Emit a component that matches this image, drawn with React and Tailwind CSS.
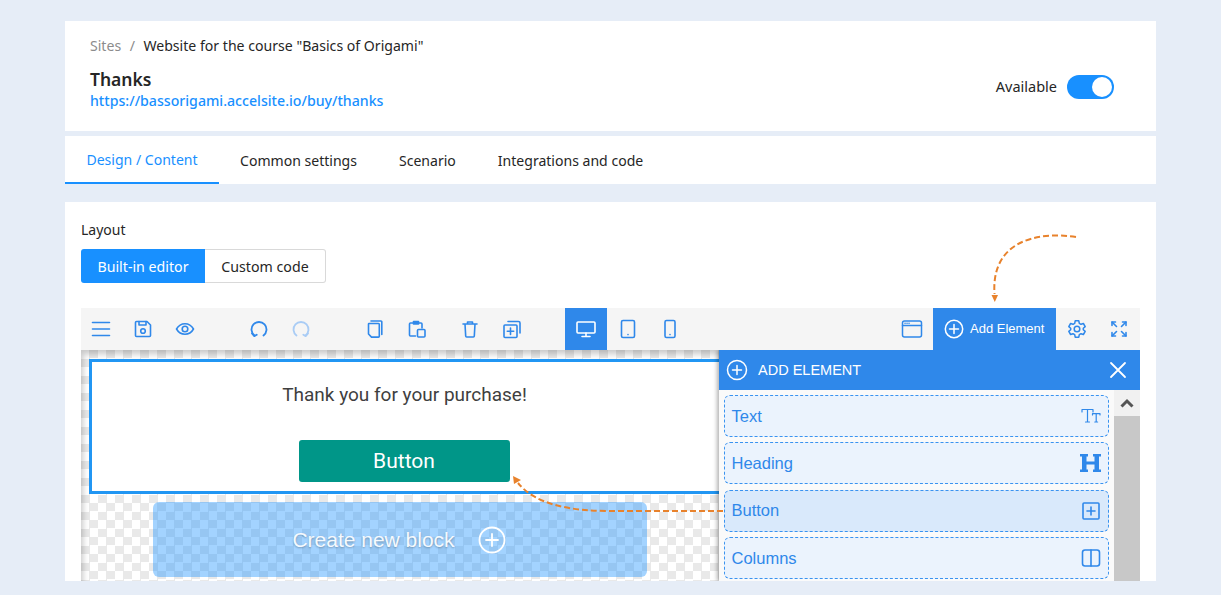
const B = "#2f88ea";
const Ic = ({ children, s = 20, className = "", color = B, vb, sw = 1.7 }) => (
  <svg width={s} height={s} viewBox={vb || `0 0 ${s} ${s}`} fill="none" stroke={color} strokeWidth={sw} strokeLinecap="round" strokeLinejoin="round" className={className}>{children}</svg>
);
const TB = ({ children, active }) => (
  <div className={`w-[42px] h-[42px] flex items-center justify-center shrink-0 ${active ? "bg-[#2f88ea]" : ""}`}>{children}</div>
);
const Item = ({ label, active, children }) => (
  <div className={`h-[42px] rounded-md border border-dashed border-[#3a93f0] flex items-center justify-between pl-[6.5px] pr-[7px] text-[16.5px] text-[#2f88ea] ${active ? "bg-[#d9e9fb]" : "bg-[#ebf3fd]"}`}>
    <span>{label}</span>
    {children}
  </div>
);
const board = "bg-[conic-gradient(#e9e9e9_25%,#ffffff_0_50%,#e9e9e9_0_75%,#ffffff_0)] bg-[size:17px_17px]";

export default function App() {
  return (
    <div className="h-[595px] overflow-hidden bg-[#e6edf7] px-[65px] pt-[21px] font-['Noto_Sans',sans-serif] text-[#262626]">
      <div className="w-[1091px] h-[110px] bg-white flex justify-between pl-[25px] pr-[42px]">
        <div className="pt-[15px]">
          <div className="text-[14.1px] leading-[20px] flex">
            <span className="text-[#8c8c8c]">Sites</span>
            <span className="text-[#8c8c8c] mx-[8.5px]">/</span>
            <span>Website for the course "Basics of Origami"</span>
          </div>
          <div className="mt-[12px] text-[17.5px] leading-[22px] font-semibold">Thanks</div>
          <div className="mt-px text-[14.15px] leading-[20px] font-medium text-[#1890ff]">https://bassorigami.accelsite.io/buy/thanks</div>
        </div>
        <div className="flex items-center gap-[10px] pt-[22px]">
          <span className="text-[14.5px]">Available</span>
          <div className="w-[47px] h-[24px] rounded-full bg-[#1890ff] flex justify-end items-center pr-[2px]">
            <div className="w-[20px] h-[20px] rounded-full bg-white"></div>
          </div>
        </div>
      </div>

      <div className="w-[1091px] h-[48px] mt-[5px] bg-white flex text-[14.05px]">
        <div className="h-[48px] w-[154px] pt-px flex items-center justify-center text-[#1890ff] border-b-2 border-[#1890ff]">Design / Content</div>
        <div className="h-[48px] px-[21px] pt-[2px] flex items-center">Common settings</div>
        <div className="h-[48px] px-[21px] pt-[2px] flex items-center">Scenario</div>
        <div className="h-[48px] px-[21px] pt-[2px] flex items-center">Integrations and code</div>
      </div>

      <div className="w-[1091px] h-[379px] mt-[18px] bg-white px-[16px] pt-[18px] overflow-hidden relative">
        <div className="text-[14px] leading-[20px]">Layout</div>
        <div className="flex mt-[9px] text-[14.2px]">
          <div className="w-[124px] h-[34px] pt-px bg-[#1890ff] text-white rounded-l-[3px] flex items-center justify-center">Built-in editor</div>
          <div className="w-[121px] h-[34px] pt-px border border-l-0 border-[#d9d9d9] rounded-r-[3px] flex items-center justify-center">Custom code</div>
        </div>

        <div className="mt-[25px] w-[1059px] font-['Liberation_Sans',sans-serif]">
          <div className="h-[42px] bg-[#f5f5f5] flex">
            <div className="flex -ml-px">
              <TB><Ic sw={1.6}><path d="M1.500 3.500h17M1.500 10h17M1.500 16.500h17" /></Ic></TB>
              <TB><Ic sw={1.6}><path d="M2.500 3.500a1 1 0 0 1 1-1h10.500l3.500 3.500v10.500a1 1 0 0 1-1 1h-13a1 1 0 0 1-1-1z" /><path d="M6 2.500v3.500h7V2.500" /><circle cx="10" cy="12" r="2.300" /></Ic></TB>
              <TB><Ic sw={1.6}><path d="M1.500 10c2-3.500 5-5.300 8.500-5.300s6.500 1.800 8.500 5.300c-2 3.500-5 5.300-8.500 5.300S3.500 13.500 1.500 10z" /><circle cx="10" cy="10" r="2.800" /></Ic></TB>
            </div>
            <div className="flex ml-[32px]">
              <TB><Ic sw={1.8}><path d="M5.500 16.500a7.500 7.500 0 1 1 9 0" /><path d="M3 14.500l2.300 2.600 2.400-1.300" /></Ic></TB>
              <TB><Ic sw={1.8} color="#a9ccf5"><path d="M5.500 16.500a7.500 7.500 0 1 1 9 0" /><path d="M17 14.500l-2.300 2.600-2.400-1.300" /></Ic></TB>
            </div>
            <div className="flex ml-[32px]">
              <TB><Ic sw={1.6}><path d="M4 4.500h9.500a.8.800 0 0 1 .8.800v12a.8.800 0 0 1-.8.800H6.500L3.500 15V5a.5.500 0 0 1 .5-.5z" /><path d="M6 2h10a.8.800 0 0 1 .8.800V15.500" /></Ic></TB>
              <TB><Ic sw={1.6}><path d="M8.500 17H3.500a1 1 0 0 1-1-1V5a1 1 0 0 1 1-1h10.500a1 1 0 0 1 1 1v4" /><rect x="6.500" y="2.500" width="5" height="2.500" fill={B} /><rect x="10.500" y="10.500" width="7.500" height="7.500" rx="1" /></Ic></TB>
            </div>
            <div className="flex ml-[11px]">
              <TB><Ic sw={1.6}><path d="M3 5h14M7.500 5V3h5v2M5 5l.7 12a1 1 0 0 0 1 1h6.600a1 1 0 0 0 1-1L15 5" /></Ic></TB>
              <TB><Ic sw={1.6}><rect x="2" y="6" width="13" height="12.500" rx="1" /><path d="M8.500 9v6.500M5.300 12.200h6.400" /><path d="M6 2.500h10.500a1.500 1.500 0 0 1 1.500 1.500V14" /></Ic></TB>
            </div>
            <div className="flex ml-[32px]">
              <TB active><Ic sw={1.6} color="#ffffff"><rect x="1" y="3" width="18" height="11" rx="1" /><path d="M10 14v3M6 17.500h8" /></Ic></TB>
              <TB><Ic sw={1.6}><rect x="3.500" y="1.500" width="13" height="17" rx="1.500" /><path d="M10 15.500v.1" /></Ic></TB>
              <TB><Ic sw={1.6}><rect x="5" y="1.500" width="10" height="17" rx="1.500" /><path d="M10 15.500v.1" /></Ic></TB>
            </div>
            <div className="flex ml-auto">
              <TB><Ic s={22} sw={1.5}><rect x="1.500" y="3" width="19" height="16" rx="2" /><path d="M1.500 7.500h19" /><path d="M4 5.300h.1M6 5.300h.1M8 5.300h.1" /></Ic></TB>
              <div className="w-[123px] h-[42px] bg-[#2f88ea] text-white text-[13px] flex items-center pl-[11px] gap-[6px]">
                <Ic sw={1.5} color="#ffffff"><circle cx="10" cy="10" r="8.700" /><path d="M10 5.500v9M5.500 10h9" /></Ic>
                <span className="whitespace-nowrap">Add Element</span>
              </div>
              <TB><Ic sw={1.5}><path d="M8.200 1.800h3.600l.5 2.500 1.700 1 2.400-.8 1.800 3.100-1.900 1.700v1.400l1.900 1.700-1.800 3.100-2.400-.8-1.700 1-.5 2.500H8.200l-.5-2.500-1.700-1-2.400.8-1.800-3.100 1.900-1.700V9.300L1.800 7.600l1.800-3.100 2.400.8 1.700-1z" /><circle cx="10" cy="10" r="2.800" /></Ic></TB>
              <TB><Ic s={18} sw={1.6}><path d="M2 2l4.500 4.500M16 2l-4.500 4.500M2 16l4.500-4.500M16 16l-4.500-4.500" /><path d="M2 5.500V2h3.500M16 5.500V2h-3.500M2 12.500V16h3.500M16 12.500V16h-3.500" /></Ic></TB>
            </div>
          </div>

          <div className={`relative h-[231px] overflow-hidden ${board}`}>
            <div className="absolute inset-0 shadow-[inset_4px_6px_6px_-2px_rgba(0,0,0,0.22)]"></div>
            <div className="relative ml-[8px] mt-[9px] w-[636px] h-[135px] bg-white border-[3px] border-[#2196f3] pr-[6px] flex flex-col items-center font-['Roboto',sans-serif] text-[#3f3f3f]">
              <div className="text-[19px] leading-[24px] mt-[21px] pl-px">Thank you for your purchase!</div>
              <div className="w-[211px] h-[42px] mt-[33px] pt-[2px] bg-[#009688] rounded-[3px] text-white text-[21px] flex items-center justify-center">Button</div>
            </div>
            <div className="relative ml-[72px] mt-[8px] w-[494px] h-[75px] rounded-md bg-[#1890ff]/40 flex items-center justify-center gap-[23px] text-white text-[21px] pr-[2px]">
              <span className="opacity-90 [text-shadow:0_1px_2px_rgba(0,0,0,0.3)]">Create new block</span>
              <Ic s={28} sw={1.8} color="#ffffff"><circle cx="14" cy="14" r="12.500" /><path d="M14 8v12M8 14h12" /></Ic>
            </div>

            <div className="absolute left-[638px] top-0 w-[421px] h-[231px] bg-[#fafafa] shadow-[-2px_0_4px_rgba(0,0,0,0.3)]">
              <div className="h-[40px] bg-[#2f88ea] text-white flex items-center pl-[7px] pr-[13px] text-[14.5px]">
                <Ic s={22} sw={1.500} color="#ffffff"><circle cx="11" cy="11" r="9.500" /><path d="M11 6.500v9M6.500 11h9" /></Ic>
                <span className="ml-[10px] pt-px">ADD ELEMENT</span>
                <Ic s={18} sw={1.800} color="#ffffff" className="ml-auto"><path d="M2 2l14 14M16 2L2 16" /></Ic>
              </div>
              <div className="flex">
                <div className="w-[395px] px-[5px] pt-[5px] flex flex-col gap-[5.33px]">
                  <Item label="Text"><Ic s={20} sw={1.2}><path d="M1 6V3.500h11V6M6.500 3.500V16M4.500 16h4M11.500 9V7.700h7.500V9M15.200 7.700V16M13.800 16h2.800" /></Ic></Item>
                  <Item label="Heading"><svg width="21" height="20" viewBox="0 0 21 20" fill="#2f88ea"><path d="M0 1h8v2.500H6.500v5h8v-5H13V1h8v2.500h-2v13h2V19h-8v-2.500h1.500v-5h-8v5H8V19H0v-2.500h2v-13H0z" /></svg></Item>
                  <Item label="Button" active><Ic sw={1.6}><rect x="2" y="2" width="16" height="16" rx="1" /><path d="M10 6v8M6 10h8" /></Ic></Item>
                  <Item label="Columns"><Ic sw={1.6}><rect x="1.500" y="2" width="17" height="16" rx="2.500" /><path d="M10 2v16" /></Ic></Item>
                </div>
                <div className="w-[26px] h-[191px] bg-[#c8c8c8] shrink-0">
                  <div className="h-[26px] bg-[#f1f1f1] flex items-center justify-center">
                    <svg width="14" height="10" viewBox="0 0 14 10" fill="none" stroke="#555555" strokeWidth="3"><path d="M1.500 8.500L7 3l5.500 5.500" /></svg>
                  </div>
                </div>
              </div>
            </div>

            <svg className="absolute left-[420px] top-[115px]" width="240" height="60" viewBox="0 0 240 60" fill="none">
              <path d="M222 46H110C70 46 35 40 17 18" stroke="#e8822c" strokeWidth="2" strokeDasharray="6 3" />
              <path d="M12 11l8 4-7 4z" fill="#e8822c" />
            </svg>
          </div>
        </div>

        <svg className="absolute left-[920px] top-[30px]" width="100" height="75" viewBox="0 0 100 75" fill="none">
          <path d="M91 5C50 -1 6 10 9.500 62" stroke="#e8822c" strokeWidth="2" strokeDasharray="6 3" />
          <path d="M6.500 63h6.500l-3.200 7z" fill="#e8822c" />
        </svg>
      </div>
    </div>
  );
}
